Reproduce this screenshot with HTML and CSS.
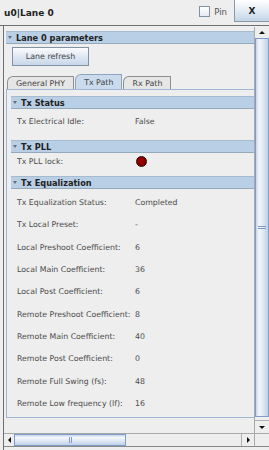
FILE: index.html
```html
<!DOCTYPE html>
<html lang="en">
<head>
    <meta charset="UTF-8">
    <title>u0|Lane 0</title>
    <link rel="stylesheet" href="styles.css">
</head>
<body>
    <div class="window">
        <div class="titlebar">
            <span class="title">u0|Lane 0</span>
            <label class="pin"><span class="checkbox"></span>Pin</label>
            <div class="close">X</div>
        </div>
        <div class="frame">
            <div class="scrollpane">
                <div class="viewport">
                    <div class="group-header top-header"><span class="arrow"></span>Lane 0 parameters</div>
                    <div class="refresh">Lane refresh</div>
                    <div class="tabs">
                        <div class="tab">General PHY</div>
                        <div class="tab selected">Tx Path</div>
                        <div class="tab">Rx Path</div>
                    </div>
                    <div class="panel">
                        <div class="group-header status-header"><span class="arrow"></span>Tx Status</div>
                        <div class="row status-row"><span class="label">Tx Electrical Idle:</span><span class="value">False</span></div>

                        <div class="group-header pll-header"><span class="arrow"></span>Tx PLL</div>
                        <div class="row pll-row"><span class="label">Tx PLL lock:</span><span class="value"><span class="led"></span></span></div>

                        <div class="group-header eq-header"><span class="arrow"></span>Tx Equalization</div>
                        <div class="eq-rows">
                            <div class="row"><span class="label">Tx Equalization Status:</span><span class="value">Completed</span></div>
                            <div class="row"><span class="label">Tx Local Preset:</span><span class="value">-</span></div>
                            <div class="row"><span class="label">Local Preshoot Coefficient:</span><span class="value">6</span></div>
                            <div class="row"><span class="label">Local Main Coefficient:</span><span class="value">36</span></div>
                            <div class="row"><span class="label">Local Post Coefficient:</span><span class="value">6</span></div>
                            <div class="row"><span class="label">Remote Preshoot Coefficient:</span><span class="value">8</span></div>
                            <div class="row"><span class="label">Remote Main Coefficient:</span><span class="value">40</span></div>
                            <div class="row"><span class="label">Remote Post Coefficient:</span><span class="value">0</span></div>
                            <div class="row"><span class="label">Remote Full Swing (fs):</span><span class="value">48</span></div>
                            <div class="row"><span class="label">Remote Low frequency (lf):</span><span class="value">16</span></div>
                        </div>
                    </div>
                </div>
                <div class="vscroll">
                    <div class="btn-up"><span class="tri up"></span></div>
                    <div class="vthumb"><span class="grip-h"></span></div>
                    <div class="vtrack"></div>
                    <div class="btn-down"><span class="tri down"></span></div>
                </div>
                <div class="hscroll">
                    <div class="btn-left"><span class="tri left"></span></div>
                    <div class="hthumb"><span class="grip-v"></span></div>
                    <div class="htrack"></div>
                    <div class="btn-right"><span class="tri right"></span></div>
                </div>
                <div class="corner"></div>
            </div>
        </div>
    </div>
</body>
</html>
```

FILE: styles.css
```css
body {
    margin: 0;
    background: #eeeeee;
    font-family: "DejaVu Sans", sans-serif;
    color: #333;
}
.window {
    width: 269px;
    height: 450px;
    display: flex;
    flex-direction: column;
    overflow: hidden;
}
.titlebar {
    height: 25px;
    border-bottom: 1px solid #6f6f6f;
    display: flex;
    align-items: center;
}
.title {
    flex: 1;
    padding-left: 4px;
    font-weight: bold;
    font-size: 9px;
    color: #222;
}
.pin {
    display: flex;
    align-items: center;
    gap: 4px;
    font-size: 8.5px;
    color: #555;
    margin-right: 7px;
    margin-top: -2px;
}
.checkbox {
    width: 9px;
    height: 9px;
    border: 1px solid #8092a4;
    background: linear-gradient(#ffffff, #e4ebf2);
}
.close {
    align-self: flex-start;
    width: 34px;
    height: 21px;
    border-left: 1px solid #8a9aa9;
    border-bottom: 1px solid #8a9aa9;
    background: linear-gradient(#ffffff, #e6eef6 45%, #c3d5e8);
    font-weight: bold;
    font-size: 9px;
    color: #222;
    display: flex;
    align-items: center;
    justify-content: center;
}
.frame {
    flex: 1;
    margin-left: 3px;
    border-left: 1px solid #6f6f6f;
    padding-top: 1px;
}
.scrollpane {
    display: grid;
    grid-template-columns: 250px 15px;
    grid-template-rows: 406px 13px;
    border-bottom: 1px solid #8a8a8a;
}
.viewport {
    overflow: hidden;
    position: relative;
}
.group-header {
    height: 11px;
    background: #b8cfe5;
    border-top: 1px solid #a7bbcf;
    border-bottom: 1px solid #95a9bd;
    display: flex;
    align-items: center;
    font-weight: bold;
    font-size: 8.2px;
    color: #222;
}
.arrow {
    width: 0;
    height: 0;
    border-left: 2.5px solid transparent;
    border-right: 2.5px solid transparent;
    border-top: 3px solid #66717c;
    margin: 0 4px 0 2px;
}
.top-header {
    margin: 4px 0 0 2px;
}
.refresh {
    margin: 3px 0 0 8px;
    width: 75px;
    height: 17px;
    border: 1px solid #8092a4;
    background: linear-gradient(#fbfcfe, #dfe8f2 50%, #c8d8ea);
    font-size: 7.9px;
    color: #444;
    display: flex;
    align-items: center;
    justify-content: center;
}
.tabs {
    display: flex;
    align-items: flex-end;
    margin: 8px 0 0 3px;
    height: 15px;
}
.tab {
    height: 12px;
    padding: 0 8px 0 8px;
    border: 1px solid #8f8f8f;
    border-bottom: none;
    border-top-left-radius: 6px 6px;
    background: #e6e6e6;
    font-size: 7.9px;
    color: #444;
    display: flex;
    align-items: center;
    margin-right: 1px;
}
.tab.selected {
    height: 14px;
    background: #c9dbed;
    border-color: #8ea5be;
}
.panel {
    margin-left: 2px;
    height: 327px;
    border: 1px solid #a0b8d3;
    border-right: none;
    padding-left: 4px;
}
.status-header {
    margin-top: 6px;
}
.row {
    display: flex;
    align-items: center;
    height: 22.3px;
    font-size: 7.8px;
    color: #4a4a4a;
    padding-left: 6px;
}
.label {
    width: 118px;
}
.status-row {
    margin-top: 1px;
    height: 22px;
}
.pll-header {
    margin-top: 8px;
}
.pll-row {
    height: 16px;
}
.led {
    display: block;
    width: 9px;
    height: 9px;
    border-radius: 50%;
    border: 1px solid #2a0000;
    background: radial-gradient(circle at 40% 40%, #a00000, #700000);
    margin-left: 1px;
}
.eq-header {
    margin-top: 7px;
}
.eq-rows {
    padding-top: 2.5px;
}
.vscroll {
    display: flex;
    flex-direction: column;
    border-left: 1px solid #a9a9a9;
}
.btn-up, .btn-down, .btn-left, .btn-right {
    display: flex;
    align-items: center;
    justify-content: center;
    background: #eeeeee;
}
.btn-up {
    height: 11px;
}
.btn-down {
    height: 12px;
    border-top: 1px solid #b0b0b0;
}
.vthumb {
    height: 377px;
    border: 1px solid #7f9cc7;
    background: linear-gradient(90deg, #c4d5e9, #f4f7fb 25%, #dfe8f3 60%, #bdd0e6);
    display: flex;
    align-items: center;
    justify-content: center;
}
.vtrack {
    flex: 1;
}
.grip-h {
    width: 8px;
    height: 1px;
    border-top: 1px solid #7f9cc7;
    border-bottom: 1px solid #7f9cc7;
}
.hscroll {
    display: flex;
    border-top: 1px solid #a9a9a9;
}
.btn-left {
    width: 10px;
}
.btn-right {
    width: 12px;
    border-left: 1px solid #b0b0b0;
}
.hthumb {
    width: 110px;
    border: 1px solid #7f9cc7;
    background: linear-gradient(#c4d5e9, #f4f7fb 25%, #dfe8f3 60%, #bdd0e6);
    display: flex;
    align-items: center;
    justify-content: center;
}
.htrack {
    flex: 1;
}
.grip-v {
    width: 1px;
    height: 6px;
    border-left: 1px solid #7f9cc7;
    border-right: 1px solid #7f9cc7;
}
.corner {
    border-top: 1px solid #a9a9a9;
    border-left: 1px solid #a9a9a9;
}
.tri {
    width: 0;
    height: 0;
}
.tri.up {
    border-left: 3px solid transparent;
    border-right: 3px solid transparent;
    border-bottom: 3px solid #111;
}
.tri.down {
    border-left: 3px solid transparent;
    border-right: 3px solid transparent;
    border-top: 3px solid #111;
}
.tri.left {
    border-top: 3px solid transparent;
    border-bottom: 3px solid transparent;
    border-right: 3px solid #111;
}
.tri.right {
    border-top: 3px solid transparent;
    border-bottom: 3px solid transparent;
    border-left: 3px solid #111;
}
```
